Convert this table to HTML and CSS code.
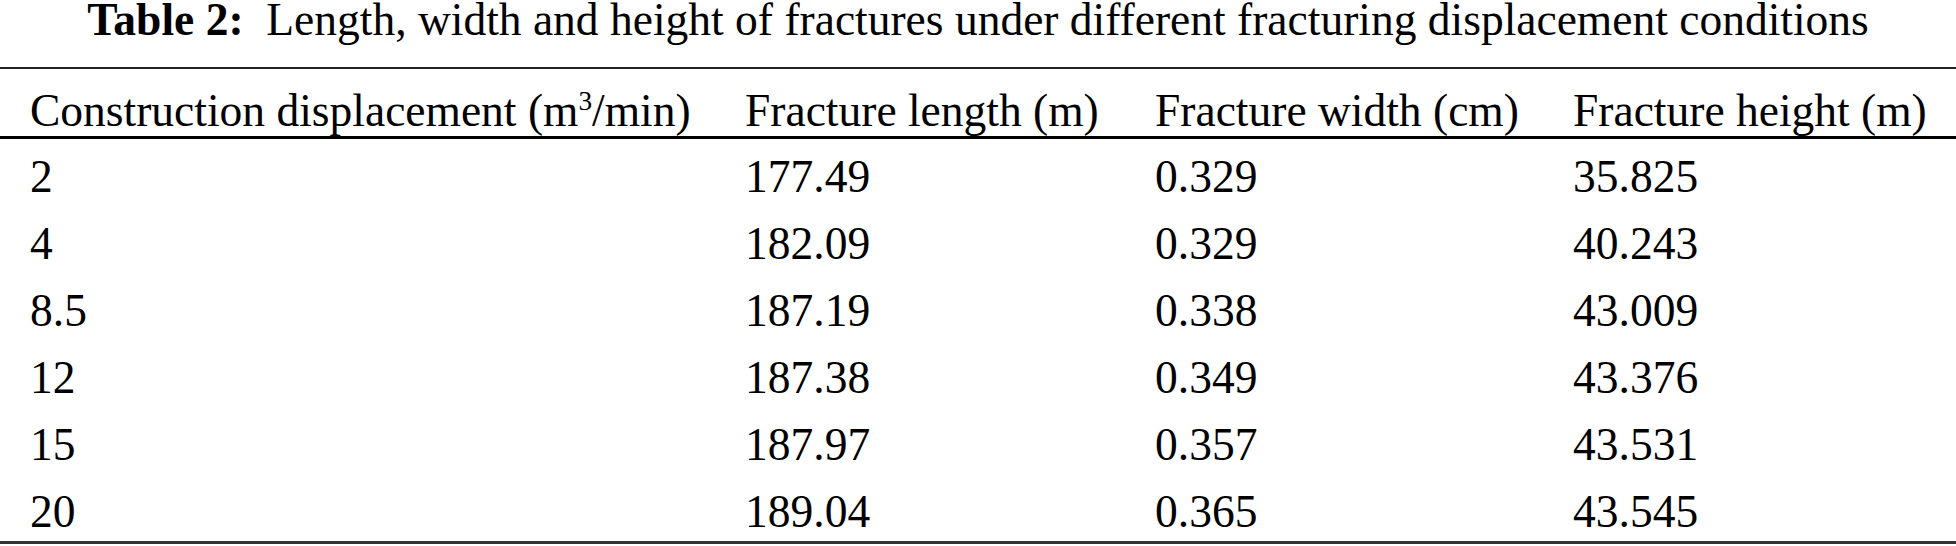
FILE: index.html
```html
<!DOCTYPE html>
<html lang="en">
<head>
<meta charset="utf-8">
<title>Table 2</title>
<link rel="stylesheet" href="styles.css">
</head>
<body>
<div class="caption"><span class="label">Table 2:</span>&nbsp; Length, width and height of fractures under different fracturing displacement conditions</div>
<table class="data">
  <colgroup>
    <col class="c1"><col class="c2"><col class="c3"><col class="c4">
  </colgroup>
  <thead>
    <tr>
      <th>Construction displacement (m<sup>3</sup>/min)</th>
      <th>Fracture length (m)</th>
      <th>Fracture width (cm)</th>
      <th>Fracture height (m)</th>
    </tr>
  </thead>
  <tbody>
    <tr><td>2</td><td>177.49</td><td>0.329</td><td>35.825</td></tr>
    <tr><td>4</td><td>182.09</td><td>0.329</td><td>40.243</td></tr>
    <tr><td>8.5</td><td>187.19</td><td>0.338</td><td>43.009</td></tr>
    <tr><td>12</td><td>187.38</td><td>0.349</td><td>43.376</td></tr>
    <tr><td>15</td><td>187.97</td><td>0.357</td><td>43.531</td></tr>
    <tr><td>20</td><td>189.04</td><td>0.365</td><td>43.545</td></tr>
  </tbody>
</table>
</body>
</html>
```
FILE: styles.css
```css
html, body {
  margin: 0;
  padding: 0;
  background: #ffffff;
}
body {
  font-family: "Liberation Serif", "Times New Roman", serif;
  font-size: 45.5px;
  color: #000;
  width: 1956px;
}
.caption {
  text-align: center;
  line-height: 40px;
  height: 40px;
  margin-bottom: 27px;
  white-space: nowrap;
}
.label {
  font-weight: bold;
}
.data {
  width: 1956px;
  table-layout: fixed;
  border-collapse: collapse;
  border-top: 2px solid #222;
  border-bottom: 3px solid #333;
}
.c1 { width: 715px; }
.c2 { width: 410px; }
.c3 { width: 418px; }
.c4 { width: 413px; }
.data th,
.data td {
  text-align: left;
  font-weight: normal;
  white-space: nowrap;
  line-height: 50px;
  padding: 0 0 0 30px;
}
.data th {
  padding-top: 16.5px;
  padding-bottom: 0.5px;
  border-bottom: 3px solid #000;
}
.data td {
  padding-top: 12.5px;
  padding-bottom: 4.5px;
}
sup {
  font-size: 0.6em;
  line-height: 0;
  vertical-align: 0.6em;
}
```
